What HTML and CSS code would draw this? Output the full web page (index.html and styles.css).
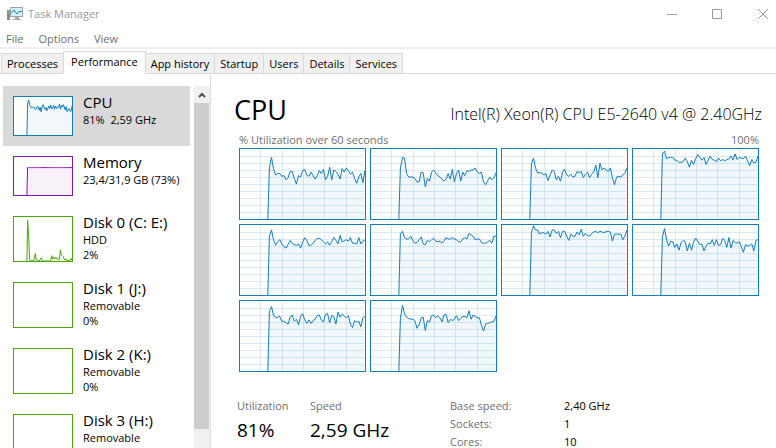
FILE: index.html
```html
<!DOCTYPE html>
<html lang="en">
<head>
    <meta charset="UTF-8">
    <meta name="viewport" content="width=device-width, initial-scale=1.0">
    <title>Task Manager</title>
    <link rel="stylesheet" href="styles.css">
</head>
<body>
    <header class="titlebar">
        <svg class="app-icon" width="16" height="16" viewBox="0 0 16 16">
            <rect x="0" y="4" width="3" height="10" fill="#8d8d8d"/>
            <rect x="1" y="5" width="1" height="2" fill="#5fd35f"/>
            <rect x="3.5" y="1.5" width="12" height="9" fill="#d4effb" stroke="#a3a3a3"/>
            <path d="M4.500 7 L7 4 L10 8 L12 5.500 H15" fill="none" stroke="#1b83b5"/>
            <path d="M8 11h4v2h2v1H6v-1h2z" fill="#a8a8a8"/>
        </svg>
        <span class="title">Task Manager</span>
        <div class="window-buttons">
            <button aria-label="Minimize"><svg width="12" height="12"><path d="M1 6.500h10"/></svg></button>
            <button aria-label="Maximize"><svg width="12" height="12"><path d="M1.500 1.500h9v9h-9z"/></svg></button>
            <button aria-label="Close"><svg width="12" height="12"><path d="M1 1l10 10M11 1L1 11"/></svg></button>
        </div>
    </header>
    <nav class="menu">
        <button>File</button>
        <button>Options</button>
        <button>View</button>
    </nav>
    <div class="tabs" role="tablist">
        <button role="tab">Processes</button>
        <button role="tab" class="active" aria-selected="true">Performance</button>
        <button role="tab">App history</button>
        <button role="tab">Startup</button>
        <button role="tab">Users</button>
        <button role="tab">Details</button>
        <button role="tab">Services</button>
    </div>
    <div class="content">
        <aside class="sidebar">
            <div class="devices">
                <button class="device cpu selected">
                    <svg class="thumb" data-chart="mini-cpu"></svg>
                    <span class="info"><span class="name">CPU</span><span>81% &nbsp;2,59 GHz</span></span>
                </button>
                <button class="device memory">
                    <svg class="thumb" data-chart="mini-memory"></svg>
                    <span class="info"><span class="name">Memory</span><span>23,4/31,9 GB (73%)</span></span>
                </button>
                <button class="device disk">
                    <svg class="thumb" data-chart="mini-disk"></svg>
                    <span class="info"><span class="name">Disk 0 (C: E:)</span><span>HDD</span><span>2%</span></span>
                </button>
                <button class="device disk">
                    <svg class="thumb"></svg>
                    <span class="info"><span class="name">Disk 1 (J:)</span><span>Removable</span><span>0%</span></span>
                </button>
                <button class="device disk">
                    <svg class="thumb"></svg>
                    <span class="info"><span class="name">Disk 2 (K:)</span><span>Removable</span><span>0%</span></span>
                </button>
                <button class="device disk">
                    <svg class="thumb"></svg>
                    <span class="info"><span class="name">Disk 3 (H:)</span><span>Removable</span><span>0%</span></span>
                </button>
            </div>
            <div class="scrollbar">
                <button class="scroll-up" aria-label="Scroll up"><svg width="8" height="6"><path d="M1 5l3-3 3 3"/></svg></button>
                <div class="scroll-thumb"></div>
            </div>
        </aside>
        <main class="details">
            <div class="heading">
                <h1>CPU</h1>
                <span class="model">Intel(R) Xeon(R) CPU E5-2640 v4 @ 2.40GHz</span>
            </div>
            <div class="caption">
                <span>% Utilization over 60 seconds</span>
                <span>100%</span>
            </div>
            <div class="charts" id="charts"></div>
            <div class="stats">
                <div class="stat">
                    <span class="label">Utilization</span>
                    <span class="value">81%</span>
                </div>
                <div class="stat">
                    <span class="label">Speed</span>
                    <span class="value">2,59 GHz</span>
                </div>
                <table class="specs">
                    <tr><th scope="row">Base speed:</th><td>2,40 GHz</td></tr>
                    <tr><th scope="row">Sockets:</th><td>1</td></tr>
                    <tr><th scope="row">Cores:</th><td>10</td></tr>
                </table>
            </div>
        </main>
    </div>
    <script src="charts.js"></script>
</body>
</html>
```

FILE: styles.css
```css
* {
    box-sizing: border-box;
}
body {
    margin: 0;
    height: 100vh;
    display: flex;
    flex-direction: column;
    overflow: hidden;
    background: #fff;
    color: #000;
    font: 11px/16px "Segoe UI", "Open Sans", "Noto Sans", sans-serif;
}
button {
    font: inherit;
    color: inherit;
    background: none;
    border: 0;
    padding: 0;
    text-align: left;
}
.titlebar {
    flex: none;
    display: flex;
    align-items: center;
    height: 28px;
    padding-left: 7px;
    color: #999;
}
.title {
    margin-left: 5px;
}
.window-buttons {
    display: flex;
    margin-left: auto;
}
.window-buttons button {
    display: flex;
    align-items: center;
    justify-content: center;
    width: 45px;
    height: 26px;
}
.window-buttons button:last-child {
    width: 47px;
    margin-right: -10px;
}
.window-buttons path {
    fill: none;
    stroke: #999;
}
.menu {
    flex: none;
    display: flex;
    gap: 15px;
    height: 21px;
    padding: 3px 6px 0;
    color: #6d6d6d;
    border-bottom: 2px solid #f0f0f0;
}
.tabs {
    flex: none;
    display: flex;
    align-items: flex-end;
    height: 25px;
    padding-left: 1px;
    box-shadow: inset 0 -1px #d9d9d9;
}
.tabs button {
    height: 21px;
    padding: 1px 5px 0;
    margin-right: -1px;
    background: #f0f0f0;
    border: 1px solid #d9d9d9;
}
.tabs .active {
    height: 23px;
    padding: 0 7px 2px;
    background: #fff;
    border-bottom-color: #fff;
    z-index: 1;
}
.content {
    flex: 1;
    min-height: 0;
    display: flex;
}
.sidebar {
    flex: none;
    display: flex;
    width: 211px;
    padding: 12px 0 0 3px;
    border-right: 1px solid #dcdcdc;
}
.devices {
    width: 187px;
    overflow: hidden;
}
.device {
    display: flex;
    align-items: flex-start;
    width: 100%;
    height: 66px;
    padding: 10px;
    gap: 10px;
}
.device.cpu, .device.memory {
    height: 60px;
}
.device.selected {
    background: #d9d9d9;
}
.thumb {
    flex: none;
    width: 60px;
    height: 46px;
    background: #fff;
    border: 1px solid;
}
.cpu .thumb, .memory .thumb {
    height: 40px;
}
.cpu .thumb {
    color: #117dbb;
}
.memory .thumb {
    color: #8b12ae;
}
.disk .thumb {
    color: #4da60c;
}
.info {
    display: flex;
    flex-direction: column;
    margin-top: -4px;
    white-space: nowrap;
}
.info span {
    line-height: 15px;
}
.info .name {
    font-size: 15px;
    line-height: 20px;
}
.scrollbar {
    width: 16px;
    margin-left: 4px;
    background: #f0f0f0;
}
.scroll-up {
    display: flex;
    align-items: center;
    justify-content: center;
    width: 100%;
    height: 17px;
}
.scroll-up path {
    fill: none;
    stroke: #505050;
    stroke-width: 2;
}
.scroll-thumb {
    height: 90%;
    margin-right: 1px;
    background: #cdcdcd;
}
.details {
    flex: 1;
    min-width: 0;
    padding: 14px 17px 0 28px;
}
.heading {
    display: flex;
    align-items: baseline;
    justify-content: space-between;
    margin: 0 -3px 0 -5px;
    white-space: nowrap;
}
h1 {
    margin: 0;
    font-size: 27px;
    font-weight: 400;
    line-height: 44px;
}
.model {
    font-size: 16px;
    font-weight: 350;
}
.caption {
    display: flex;
    justify-content: space-between;
    color: #707070;
}
.charts {
    display: grid;
    grid-template-columns: repeat(4, 1fr);
    gap: 4px;
}
.chart {
    width: 100%;
    height: 72px;
    color: #117dbb;
    border: 1px solid;
}
.grid {
    fill: none;
    stroke: #d9eaf4;
}
.area {
    fill: currentColor;
    fill-opacity: 0.06;
}
.line {
    fill: none;
    stroke: currentColor;
    vector-effect: non-scaling-stroke;
}
.stats {
    display: flex;
    margin: 26px 0 0 -2px;
}
.stat {
    display: flex;
    flex-direction: column;
    width: 73px;
    white-space: nowrap;
}
.stat + .stat {
    width: 140px;
}
.label, .specs th {
    color: #707070;
}
.value {
    font-size: 19px;
    line-height: 32px;
}
.specs {
    border-collapse: collapse;
    line-height: 18px;
    margin-top: -1px;
}
.specs th {
    width: 114px;
    padding: 0;
    font-weight: 400;
    text-align: left;
}
.specs td {
    padding: 0;
}
```

FILE: charts.js
```js
const SVG = 'http://www.w3.org/2000/svg';

// utilization in percent, one row per logical processor
const cores = [
    [73,88,72,63,65,65,61,62,56,59,68,68,58,50,62,60,69,71,63,61,67,62,57,62,69,65,71,56,61,74,56,70,68,64,57,72,67,73,69,64,67,58,51,60,65,52,70],
    [73,88,87,65,60,60,60,58,53,53,67,66,46,58,54,67,70,66,62,60,57,54,57,65,57,71,53,65,70,54,67,62,69,68,70,70,73,67,65,67,53,49,55,60,56,59,66],
    [79,87,73,66,66,66,63,65,55,63,70,68,56,61,54,67,71,63,61,64,60,61,68,66,68,59,64,67,59,64,67,77,59,80,70,73,70,68,73,59,49,60,61,60,63,66,73],
    [93,97,86,88,88,88,84,84,81,81,82,87,82,74,84,78,86,92,88,84,88,78,84,90,85,84,82,87,83,85,83,85,86,90,84,93,85,88,87,86,90,83,76,85,80,81,90],
    [84,93,79,71,76,79,73,69,67,72,78,74,72,71,73,67,76,82,78,71,71,74,78,81,81,79,76,73,76,71,76,82,78,73,85,76,77,79,77,82,74,74,73,82,73,77,79],
    [88,91,82,80,80,84,78,74,75,79,83,73,72,78,76,79,81,77,76,77,74,77,82,80,80,82,80,79,76,76,80,82,80,88,86,84,79,80,80,75,74,74,76,78,74,84,84],
    [89,99,93,93,87,89,89,87,91,83,93,93,88,91,82,91,91,84,78,87,84,84,90,86,94,84,88,85,84,88,90,91,89,91,90,89,91,91,90,77,87,87,87,87,79,84,93],
    [83,95,80,70,77,76,68,73,64,75,78,76,63,74,64,76,81,77,72,73,63,70,74,73,79,71,79,71,72,81,78,68,82,67,78,75,74,76,69,61,72,70,71,73,63,78,79],
    [85,92,80,76,77,78,71,71,69,67,77,80,71,74,66,78,82,73,68,73,68,72,74,79,80,73,70,81,82,69,79,78,67,84,77,81,79,76,79,67,62,72,70,71,63,76,79],
    [75,94,82,77,75,74,74,72,61,66,76,77,58,72,70,79,80,76,79,76,70,80,81,69,74,72,74,79,72,75,78,78,76,86,74,80,78,76,76,66,57,67,68,69,70,71,79]
];

const mini = {
    'mini-cpu': [82,92,80,75,71,74,72,73,67,69,76,74,65,73,61,74,80,73,67,73,64,70,76,70,79,69,70,78,68,76,70,74,73,81,68,79,73,80,74,66,75,61,66,70,63,62,76],
    'mini-memory': Array(47).fill(72),
    'mini-disk': [93,60,3,0,3,1,0,6,17,2,3,1,0,3,7,2,0,0,0,0,0,0,0,0,1,12,4,9,5,9,5,6,2,4,26,14,12,10,4,2,5,1,2,0,2,6,1]
};

function shape(svg, tag, cls, attr, value) {
    const el = document.createElementNS(SVG, tag);
    el.setAttribute('class', cls);
    el.setAttribute(attr, value);
    svg.appendChild(el);
}

function plot(svg, values, width, height) {
    const start = width * 0.235;
    const step = (width - start) / (values.length - 1);
    const points = values.map((v, i) => `${(start + i * step).toFixed(1)},${(height * (1 - v / 100)).toFixed(1)}`);
    points.unshift(`${(width * 0.222).toFixed(1)},${height}`);
    shape(svg, 'polygon', 'area', 'points', points.join(' ') + ` ${width},${height}`);
    shape(svg, 'polyline', 'line', 'points', points.join(' '));
}

cores.forEach(values => {
    const svg = document.createElementNS(SVG, 'svg');
    svg.setAttribute('class', 'chart');
    svg.setAttribute('viewBox', '0 0 125 70');
    svg.setAttribute('preserveAspectRatio', 'none');
    let d = '';
    for (let y = 7.5; y < 70; y += 7) d += `M0 ${y}H124`;
    [20.5, 42.5, 63.5, 84.5, 106.5].forEach(x => d += `M${x} 0V70`);
    shape(svg, 'path', 'grid', 'd', d);
    plot(svg, values, 125, 70);
    document.getElementById('charts').appendChild(svg);
});

document.querySelectorAll('[data-chart]').forEach(svg => {
    const height = svg.dataset.chart === 'mini-disk' ? 44 : 38;
    svg.setAttribute('viewBox', `0 0 58 ${height}`);
    plot(svg, mini[svg.dataset.chart], 58, height);
});
```
